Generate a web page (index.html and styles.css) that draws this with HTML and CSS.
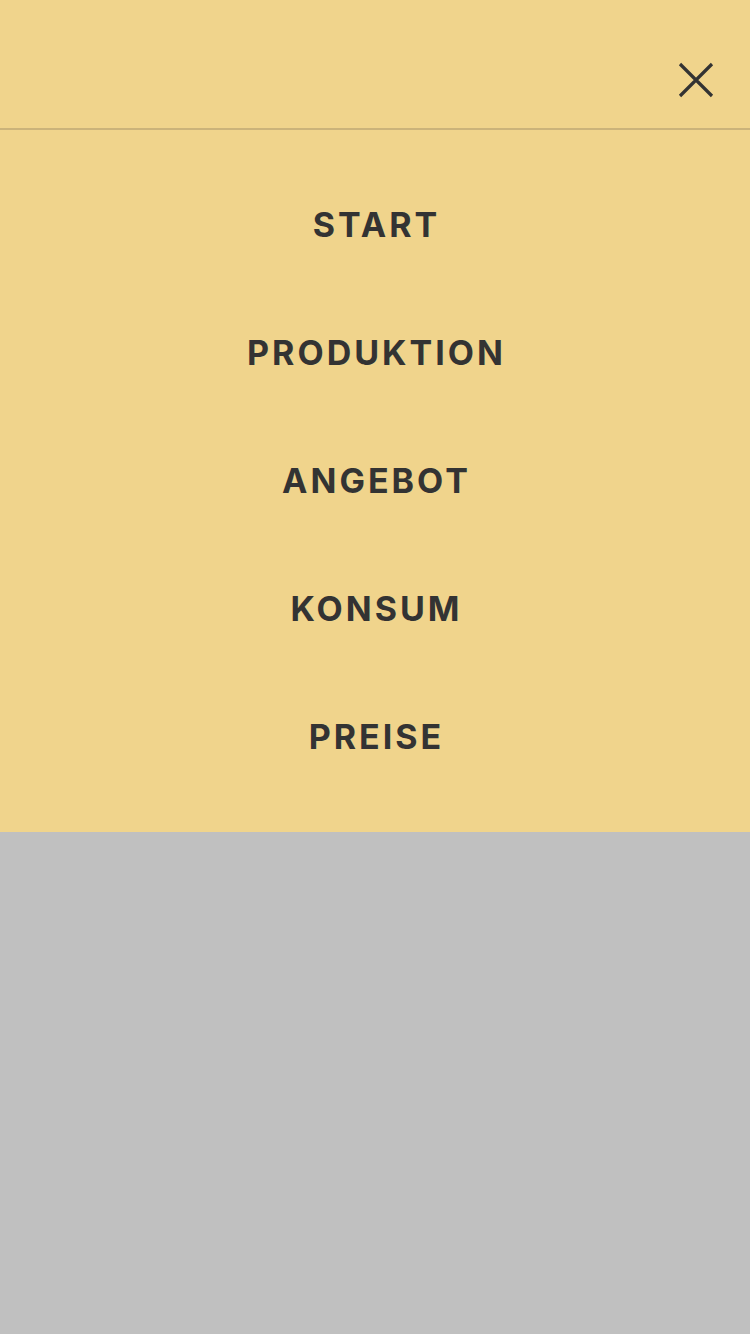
FILE: index.html
```html
<!DOCTYPE html>
<html lang="de">
<head>
<meta charset="utf-8">
<title>Menü</title>
<link rel="stylesheet" href="styles.css">
</head>
<body>
<div class="menu">
  <header class="menu-header">
    <button class="close" aria-label="Schließen">
      <svg width="36" height="36" viewBox="0 0 36 36"><path d="M2 2 L34 34 M34 2 L2 34" stroke="#333" stroke-width="3.2" fill="none"/></svg>
    </button>
  </header>
  <nav class="menu-nav">
    <a class="menu-item" href="#">START</a>
    <a class="menu-item" href="#">PRODUKTION</a>
    <a class="menu-item" href="#">ANGEBOT</a>
    <a class="menu-item" href="#">KONSUM</a>
    <a class="menu-item" href="#">PREISE</a>
  </nav>
</div>
</body>
</html>
```
FILE: styles.css
```css
html, body {
  margin: 0;
  padding: 0;
}
body {
  background: #c0c0c0;
  font-family: Inter, "Open Sans", sans-serif;
  width: 750px;
  height: 1334px;
}
.menu {
  background: #f0d48c;
}
.menu-header {
  box-sizing: border-box;
  height: 130px;
  border-bottom: 2px solid #cbb37a;
  display: flex;
  align-items: flex-start;
  justify-content: flex-end;
  padding: 62px 36px 0 0;
}
.close {
  background: none;
  border: 0;
  padding: 0;
  width: 36px;
  height: 36px;
  display: block;
}
.close svg { display: block; }
.menu-nav {
  display: flex;
  flex-direction: column;
  padding: 30px 0 32px;
}
.menu-item {
  height: 128px;
  display: flex;
  align-items: center;
  justify-content: center;
  color: #333;
  text-decoration: none;
  font-weight: 700;
  font-size: 34px;
  letter-spacing: 3px;
  padding-left: 3px;
}
```
